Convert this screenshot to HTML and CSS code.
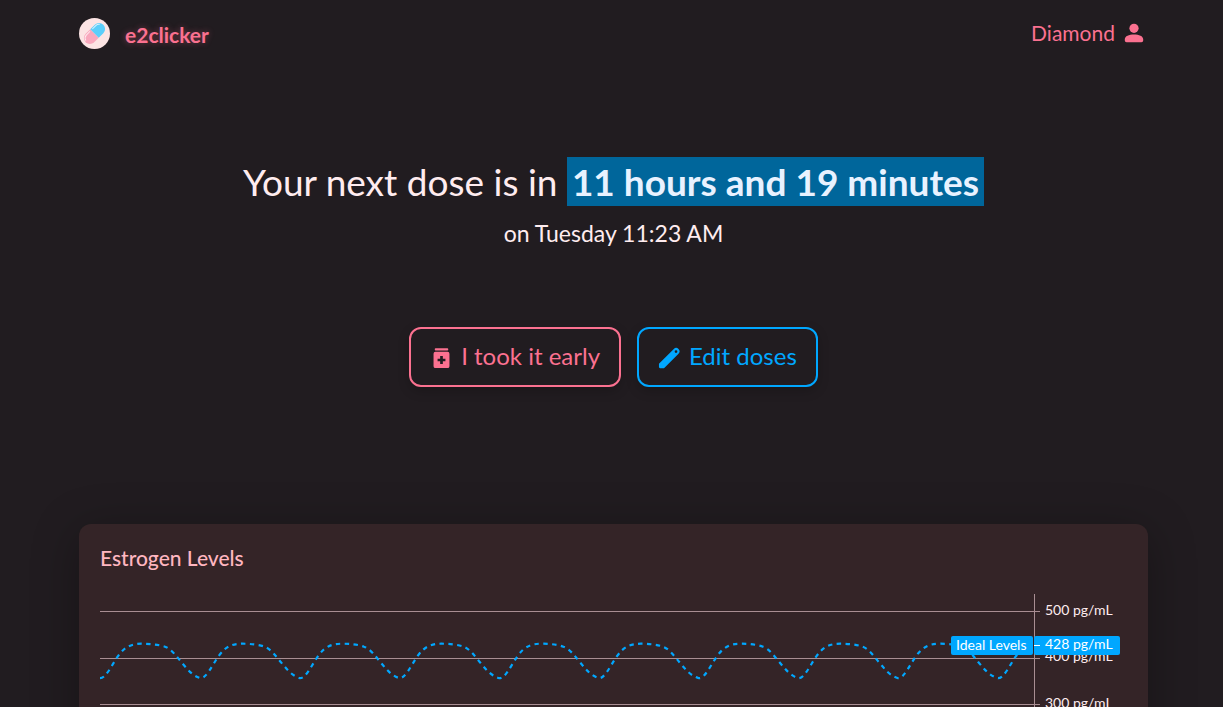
FILE: index.html
```
<!DOCTYPE html>
<html lang="en">
<head>
<meta charset="utf-8">
<meta name="viewport" content="width=device-width, initial-scale=1">
<title>e2clicker</title>
<link rel="stylesheet" href="styles.css">
</head>
<body>
<div class="page">
  <header class="topbar">
    <a class="brand" href="#">
      <svg class="brand-logo" viewBox="0 0 31 31" aria-hidden="true">
        <circle cx="15.5" cy="15.5" r="15.5" fill="#fce4e4"/>
        <g transform="rotate(-45 15.5 15.5)">
          <path d="M15.500 9.500H9A6 6 0 0 0 9 21.500H15.500Z" fill="#f9a8bd"/>
          <path d="M15.500 9.500H22a6 6 0 0 1 0 12H15.500Z" fill="#5bcefa"/>
          <path d="M4.600 14a4.500 4.500 0 0 1 4-3.200h5M17.500 10.800h4.500a4.500 4.500 0 0 1 3.500 1.700" fill="none" stroke="#fff" stroke-opacity=".75" stroke-width="1" stroke-linecap="round"/>
        </g>
      </svg>
      <span class="brand-name">e2clicker</span>
    </a>
    <a class="account" href="#">
      <span>Diamond</span>
      <svg class="account-icon" viewBox="0 0 20 20" aria-hidden="true">
        <circle cx="10" cy="5.300" r="4.600"/>
        <path d="M.8 16.300C.8 12.900 5 11.400 10 11.400s9.200 1.500 9.200 4.900V17.500a1.800 1.800 0 0 1-1.800 1.800H2.600A1.800 1.800 0 0 1 .8 17.500Z"/>
      </svg>
    </a>
  </header>

  <main class="content">
    <section class="next-dose">
      <h1 class="headline">Your next dose is in <mark class="countdown">11 hours and 19 minutes</mark></h1>
      <p class="when">on Tuesday 11:23 AM</p>
    </section>

    <div class="actions">
      <button class="action action-early" type="button">
        <svg class="action-icon" viewBox="0 0 24 24" aria-hidden="true">
          <rect x="5" y="2.300" width="14" height="2.300" rx=".8"/>
          <path fill-rule="evenodd" d="M5.700 6H18.300A2 2 0 0 1 20.300 8V21A2 2 0 0 1 18.300 23H5.700A2 2 0 0 1 3.700 21V8A2 2 0 0 1 5.700 6ZM10.600 10.500V13.200H7.900V16H10.600V18.700H13.400V16H16.100V13.200H13.400V10.500Z"/>
        </svg>
        <span class="action-label">I took it early</span>
      </button>
      <button class="action action-edit" type="button">
        <svg class="action-icon" viewBox="0 0 24 24" aria-hidden="true">
          <path fill-rule="evenodd" d="M1 18.600 16.500 3.100a3.500 3.500 0 0 1 4.900 0 3.500 3.500 0 0 1 0 4.900L6.800 22.600a2 2 0 0 1-1.400.6H2.200A1.200 1.200 0 0 1 1 22ZM17.400 5.800a1.400 1.400 0 1 0 2.800 0 1.400 1.400 0 1 0-2.800 0Z"/>
        </svg>
        <span class="action-label">Edit doses</span>
      </button>
    </div>

    <section class="card">
      <h2 class="card-title">Estrogen Levels</h2>
      <svg class="chart" viewBox="0 0 1027 280" role="img" aria-label="Estrogen levels in pg/mL">
        <g class="grid">
          <path d="M0 21.500H940M0 68.500H940M0 114.500H940M0 161.500H940M0 208.500H940"/>
          <path d="M934.500 4V255"/>
        </g>
        <g class="axis-labels">
          <text x="945" y="25">500 pg/mL</text>
          <text x="945" y="71">400 pg/mL</text>
          <text x="945" y="118">300 pg/mL</text>
          <text x="945" y="165">200 pg/mL</text>
          <text x="945" y="212">100 pg/mL</text>
        </g>
        <path class="ideal" d="M0 88.200
          c6 0 11-12 18-22s14-12.500 24-12.500c8 0 17 1 23 3c6 2 11 9 16 15c6 7 11 14 19.500 16.500
          c6 0 11-12 18-22s14-12.500 24-12.500c8 0 17 1 22 3c6 2 11 9 16 15c6 7 11 14 19.500 16.500
          c6 0 11-12 18-22s14-12.500 24-12.500c8 0 17 1 22 3c6 2 11 9 16 15c6 7 11 14 19.500 16.500
          c6 0 11-12 18-22s14-12.500 24-12.500c8 0 17 1 22 3c6 2 11 9 16 15c6 7 11 14 20 16.500
          c6 0 11-12 18-22s14-12.500 24-12.500c8 0 17 1 22 3c6 2 11 9 16 15c6 7 11 14 19.500 16.500
          c6 0 11-12 18-22s14-12.500 24-12.500c8 0 17 1 22 3c6 2 11 9 16 15c6 7 11 14 20 16.500
          c6 0 11-12 18-22s14-12.500 24-12.500c8 0 17 1 22 3c6 2 11 9 16 15c6 7 11 14 19.500 16.500
          c6 0 11-12 18-22s14-12.500 24-12.500c8 0 17 1 22 3c6 2 11 9 16 15c6 7 11 14 19.500 16.500
          c6 0 11-12 18-22s14-12.500 24-12.500c8 0 17 1 22 3c6 2 11 9 16 15c6 7 11 14 20 16.500
          c6 0 11-12 18-22s11-10 17-12"/>
        <g class="tag">
          <rect x="851" y="46" width="82" height="19" rx="2"/>
          <rect x="934" y="46" width="86" height="19" rx="2"/>
          <path d="M934 55.500h6"/>
          <text x="856" y="60">Ideal Levels</text>
          <text x="945" y="59">428 pg/mL</text>
        </g>
      </svg>
    </section>
  </main>
</div>
</body>
</html>
```
FILE: styles.css
```
* {
  box-sizing: border-box;
}

body {
  margin: 0;
  background: #211c20;
  color: #ffecef;
  font-family: Lato, "Open Sans", sans-serif;
}

.page {
  height: 100vh;
  overflow: hidden;
  padding: 0 75px 0 79px;
}

.topbar {
  display: flex;
  align-items: center;
  justify-content: space-between;
  height: 66px;
}

.brand,
.account {
  display: flex;
  align-items: center;
  color: #fb7190;
  text-decoration: none;
}

.brand {
  gap: 15px;
}

.brand-logo {
  width: 31px;
  height: 31px;
}

.brand-name {
  padding-top: 3px;
  font-size: 21px;
  font-weight: 700;
  line-height: 24px;
  text-shadow: 0 0 6px rgba(251, 113, 144, 0.4);
}

.account {
  gap: 9px;
  padding-right: 4px;
  font-size: 21px;
  line-height: 24px;
}

.account-icon {
  width: 20px;
  height: 20px;
  fill: currentColor;
}

.next-dose {
  padding-top: 91px;
  text-align: center;
}

.headline {
  margin: 0;
  font-size: 37px;
  font-weight: 400;
  line-height: 50px;
}

.countdown {
  padding: 2px 5px;
  background: #00669b;
  color: #e8f2ff;
  font-weight: 700;
}

.when {
  margin: 10px 0 0;
  font-size: 23px;
  line-height: 32px;
}

.actions {
  display: flex;
  flex-wrap: wrap;
  justify-content: center;
  gap: 16px;
  padding: 78px 0 137px;
}

.action {
  display: flex;
  align-items: center;
  gap: 8px;
  height: 60px;
  padding: 0 19px;
  border: 2px solid currentColor;
  border-radius: 12px;
  background: transparent;
  box-shadow: 0 4px 12px rgba(0, 0, 0, 0.2);
  font-family: inherit;
  font-size: 24px;
  line-height: 32px;
}

.action-early {
  color: #fb7190;
}

.action-edit {
  color: #00a7ff;
}

.action-icon {
  width: 23px;
  height: 23px;
  fill: currentColor;
}

.action-label {
  padding-bottom: 2px;
}

.card {
  padding: 20px 21px;
  border-radius: 12px;
  background: #342427;
  box-shadow: 0 8px 48px rgba(0, 0, 0, 0.3);
}

.card-title {
  margin: 0 0 18px;
  color: #ffb6c0;
  font-size: 21px;
  font-weight: 500;
  line-height: 28px;
}

.chart {
  display: block;
  width: 100%;
  font-size: 14px;
}

.grid {
  fill: none;
  stroke: #a98e93;
}

.axis-labels {
  fill: #ffecef;
}

.ideal {
  fill: none;
  stroke: #00a7ff;
  stroke-width: 2.2;
  stroke-dasharray: 4.4 4.4;
}

.tag rect {
  fill: #00a7ff;
}

.tag text {
  fill: #ffffff;
}

.tag path {
  stroke: #ffffff;
}
```
